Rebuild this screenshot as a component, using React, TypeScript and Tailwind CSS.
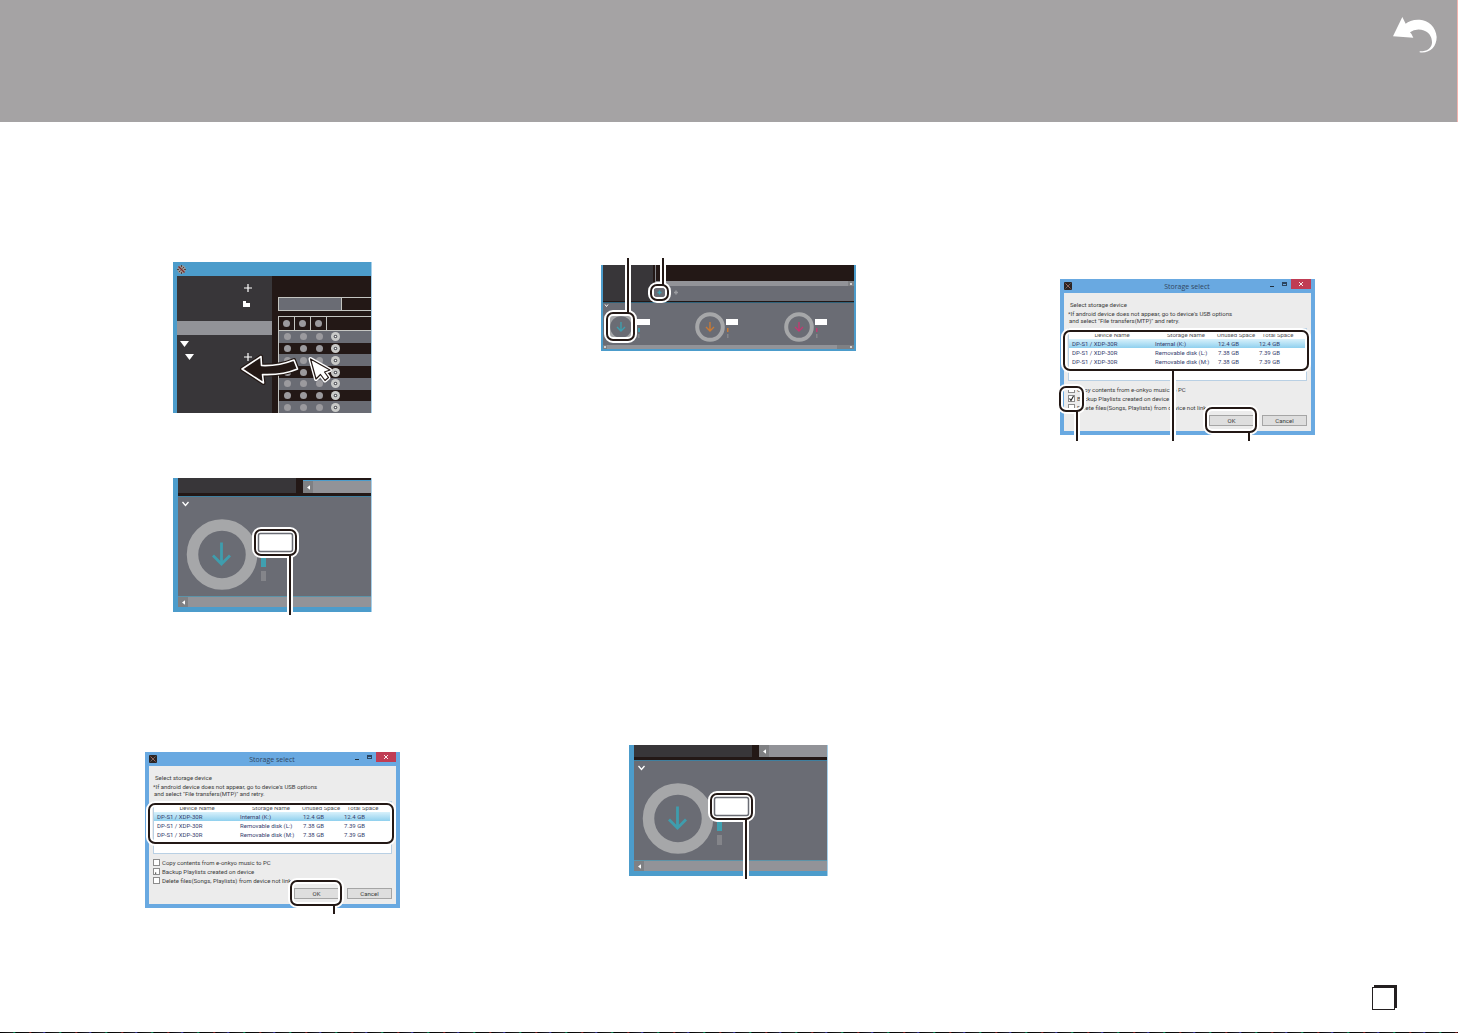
import React from 'react';

interface CalloutBox {
  x: number;
  y: number;
  w: number;
  h: number;
  r: number;
  stem?: { x: number; from: number; to: number };
}

interface CalloutsProps {
  boxes: CalloutBox[];
}

// Highlight frames with leader lines that lie over a figure
const Callouts: React.FC<CalloutsProps> = ({ boxes }) => (
  <svg className="absolute inset-0 w-full h-full overflow-visible pointer-events-none" fill="none">
    {boxes.map((b, idx) => (
      <g key={idx}>
        <rect x={b.x} y={b.y} width={b.w} height={b.h} rx={b.r} stroke="#fff" strokeWidth={6} />
        {b.stem && <path d={`M${b.stem.x} ${b.stem.from}V${b.stem.to}`} stroke="#fff" strokeWidth={6} />}
        <rect x={b.x} y={b.y} width={b.w} height={b.h} rx={b.r} stroke="#231815" strokeWidth={2} />
        {b.stem && <path d={`M${b.stem.x} ${b.stem.from}V${b.stem.to}`} stroke="#231815" strokeWidth={2} />}
      </g>
    ))}
  </svg>
);

const LogoIcon = ({ className }: { className: string }) => (
  <svg viewBox="0 0 8 8" className={className}>
    <rect width="8" height="8" rx="1" fill="#2c2524" />
    <path d="M1.500 1.500l5 5" stroke="#a5655c" strokeWidth="1" />
    <path d="M6.500 1.500l-5 5" stroke="#6d6563" strokeWidth="1" />
  </svg>
);

const PlusIcon = () => (
  <svg viewBox="0 0 8 8" className="w-2 h-2 shrink-0">
    <path d="M4 0v8M0 4h8" stroke="#fff" strokeWidth="1.200" />
  </svg>
);

const FolderIcon = () => (
  <svg viewBox="0 0 8 8" className="w-2 h-2 shrink-0">
    <path d="M1 1h3v2h4v4H1z" fill="#fff" />
  </svg>
);

const Triangle = () => (
  <svg viewBox="0 0 9 6" className="w-[9px] h-[6px] shrink-0">
    <path d="M0 0h9L4.500 6z" fill="#fff" />
  </svg>
);

const Dot = () => (
  <span className="w-4 flex justify-center">
    <span className="w-[7px] h-[7px] rounded-full bg-[#9b9a9e]"></span>
  </span>
);

const Disc = () => (
  <svg viewBox="0 0 10 10" className="w-[9px] h-[9px] ml-1">
    <circle cx="5" cy="5" r="5" fill="#c9cac8" />
    <circle cx="5" cy="5" r="2" fill="#55565b" />
    <circle cx="5" cy="5" r="0.900" fill="#fff" />
  </svg>
);

const DRAG_ARROW = 'M69 107L88 94.500L88.500 103.500C100 104 111 102 121 98L124.500 107C114 111.500 102 113 89.500 112.500L90.500 121Z';
const POINTER = 'M137.500 97L143 117L147.500 112.500L152 118.500L155.500 115.500L151.500 110L157 108Z';

const LibraryFigure: React.FC = () => (
  <div className="relative w-[199px] h-[151px] ml-7 flex flex-col bg-[#4c9ccb] border-r border-[#a5cfe9]">
    <div className="h-[14px] pl-1 flex items-center">
      <svg viewBox="0 0 9 9" className="w-[9px] h-[9px]">
        <circle cx="4.500" cy="4.500" r="4.200" fill="#9a9594" />
        <path d="M7 2L5.500 3.500M3.500 5.500L2 7M4.500 0v2M4.500 7v2M0 4.500h2M7 4.500h2" stroke="#4a4241" strokeWidth="1" />
        <path d="M1.500 1.500l6 6" stroke="#7c2b2a" strokeWidth="1.200" />
      </svg>
    </div>
    <div className="flex-1 flex pl-1">
      <div className="w-[95px] bg-[#383639] flex flex-col">
        <div className="h-6 flex items-center pl-[67px]"><PlusIcon /></div>
        <div className="h-[21px] flex items-start pl-[65px]"><FolderIcon /></div>
        <div className="h-[14px] bg-[#929398]"></div>
        <div className="h-[18px] flex items-center pl-[3px]"><Triangle /></div>
        <div className="h-2 flex items-center pl-2 gap-[50px]"><Triangle /><PlusIcon /></div>
      </div>
      <div className="flex-1 bg-[#231816] pl-[6px] pt-[21px] flex flex-col">
        <div className="h-[14px] flex border border-r-0 border-[#c4c5c1]">
          <div className="w-[63px] bg-[#6a6c74] border-r border-[#c4c5c1]"></div>
        </div>
        <div className="mt-[5px] flex-1 flex flex-col border-t border-l border-[#c4c5c1]">
          <div className="h-[14px] flex border-b border-[#c4c5c1]">
            {[0, 1, 2].map((col) => (
              <span key={col} className="w-4 flex items-center justify-center border-r border-[#c4c5c1]">
                <span className="w-[7px] h-[7px] rounded-full bg-[#9b9a9e]"></span>
              </span>
            ))}
          </div>
          {[0, 1, 2, 3, 4, 5, 6].map((row) => (
            <div key={row} className={`flex-1 flex items-center ${row % 2 === 0 ? 'bg-[#6a6c74]' : ''}`}>
              <Dot />
              <Dot />
              <Dot />
              <Disc />
            </div>
          ))}
        </div>
      </div>
    </div>
    {/* Drag arrow and mouse pointer */}
    <svg viewBox="0 0 199 151" className="absolute top-0 left-0 w-[199px] h-[151px]" strokeLinejoin="round">
      <path d={DRAG_ARROW} fill="#231815" stroke="#231815" strokeWidth="4" />
      <path d={DRAG_ARROW} fill="#231815" stroke="#fff" strokeWidth="1.600" />
      <path d={POINTER} fill="#fff" stroke="#fff" strokeWidth="4" />
      <path d={POINTER} fill="#fff" stroke="#231815" strokeWidth="1.200" />
    </svg>
  </div>
);

interface SyncFigureProps {
  topStrip?: boolean;
}

const SyncFigure: React.FC<SyncFigureProps> = ({ topStrip }) => (
  <div className="w-[199px] ml-7 bg-[#4c9ccb] border-r border-[#a5cfe9]">
    {topStrip && (
      <div className="h-[3px] pl-[5px] flex">
        <div className="w-[118px] bg-[#383639]"></div>
        <div className="w-[7px] bg-[#231816]"></div>
        <div className="flex-1 h-[2px] bg-[#231816]"></div>
      </div>
    )}
    <div className="pl-[5px]">
      <div className="h-3 flex">
        <div className="w-[118px] bg-[#383639]"></div>
        <div className="w-[7px] bg-[#231816]"></div>
        <div className="w-[10px] bg-[#7f8083] flex items-center justify-center">
          <svg viewBox="0 0 4 6" className="w-[3px] h-[5px]"><path d="M4 0v6L0 3z" fill="#fff" /></svg>
        </div>
        <div className="flex-1 bg-[#929398]"></div>
      </div>
      <div className="h-[3px] bg-[#231816]"></div>
      <div className="relative z-10 h-[100px] bg-[#6a6c74] border-t border-[#3f7f9f]">
        <svg viewBox="0 0 193 99" className="block w-[193px] h-[99px]">
          <path d="M4.500 5l3 3.500 3-3.500" fill="none" stroke="#fff" strokeWidth="1.300" />
          <circle cx="44" cy="57.500" r="29.500" fill="none" stroke="#a6a7a9" strokeWidth="11.500" />
          <path d="M43.500 45.500V67M35 58.500l8.500 8.500 8.500-8.500" fill="none" stroke="#3f9dad" strokeWidth="2.800" />
          <rect x="83" y="60" width="5" height="10" fill="#3fa0b0" />
          <rect x="83" y="74" width="5" height="10" fill="#84858a" />
        </svg>
        <Callouts boxes={[{ x: 77, y: 33, w: 41, h: 25, r: 6, stem: { x: 112, from: 58, to: 118 } }]} />
        <svg viewBox="0 0 193 99" className="absolute inset-0 w-[193px] h-[99px]">
          <rect x="80.500" y="36.500" width="34" height="18" rx="2" fill="#fff" stroke="#6a6c74" strokeWidth="1.500" />
        </svg>
      </div>
      <div className="h-[11px] flex border-t border-[#5c93a8]">
        <div className="w-[10px] bg-[#7f8083] flex items-center justify-center">
          <svg viewBox="0 0 4 6" className="w-[3px] h-[5px]"><path d="M4 0v6L0 3z" fill="#fff" /></svg>
        </div>
        <div className="flex-1 bg-[#929398]"></div>
      </div>
    </div>
    <div className="h-[5px]"></div>
  </div>
);

const RINGS = [
  { x: 18, color: '#3f9dad' },
  { x: 107, color: '#c97a35' },
  { x: 196, color: '#c23a72' },
];

const DevicesFigure: React.FC = () => (
  <div className="relative w-[255px] h-[86px] flex flex-col px-[2px] pb-[2px] bg-[#4c9ccb]">
    <div className="h-9 flex">
      <div className="w-[50px] bg-[#383639]"></div>
      <div className="w-[3px] bg-[#231816] border-r border-[#85868a]"></div>
      <div className="flex-1 flex flex-col bg-[#6a6c74]">
        <div className="h-4 bg-[#231816]"></div>
        <div className="h-[5px] bg-[#929398] flex justify-end">
          <div className="w-[6px] bg-[#7f8083] flex items-center justify-center">
            <span className="w-[2px] h-[2px] bg-[#d0d0d2]"></span>
          </div>
        </div>
        <svg viewBox="0 0 196 15" className="w-[196px] h-[15px]">
          <path d="M20 4.500v4M18 6.500h4" stroke="#9b9ca1" strokeWidth="1.500" />
        </svg>
      </div>
    </div>
    <div className="h-[2px] bg-[#231816] border-b border-[#2f6179]"></div>
    <div className="h-[42px] bg-[#6a6c74]">
      <svg viewBox="0 0 251 42" className="block w-[251px] h-[42px]">
        <path d="M2 1.500l1.500 2L5 1.500" fill="none" stroke="#fff" strokeWidth="1" />
        {RINGS.map((ring) => (
          <g key={ring.x}>
            <circle cx={ring.x} cy="24" r="12.800" fill="none" stroke="#a6a7a9" strokeWidth="4" />
            <path d={`M${ring.x} 19v9M${ring.x - 4} 24l4 4 4-4`} fill="none" stroke={ring.color} strokeWidth="1.400" />
            <rect x={ring.x + 16} y="16" width="12" height="6" fill="#fff" />
            <rect x={ring.x + 17} y="25" width="1.500" height="4" fill={ring.color} />
            <rect x={ring.x + 17} y="31" width="1.500" height="4" fill="#84858a" />
          </g>
        ))}
      </svg>
    </div>
    <div className="h-1 bg-[#929398] flex justify-between">
      <div className="w-1 bg-[#7f8083] flex items-center justify-center"><span className="w-[2px] h-[2px] bg-[#d0d0d2]"></span></div>
      <div className="w-[17px] bg-[#7f8083] flex items-center justify-end pr-[2px]"><span className="w-[2px] h-[2px] bg-[#d0d0d2]"></span></div>
    </div>
    <Callouts
      boxes={[
        { x: 6, y: 48, w: 27, h: 27, r: 6, stem: { x: 27, from: 48, to: -7 } },
        { x: 50, y: 20, w: 17, h: 15, r: 6, stem: { x: 62, from: 20, to: -7 } },
      ]}
    />
    <svg viewBox="0 0 255 86" className="absolute top-0 left-0 w-[255px] h-[86px]">
      <rect x="53" y="23" width="11" height="9" rx="3" fill="#6a6c74" />
      <path d="M58.500 25.500v4M56.500 27.500h4" stroke="#3fa0b0" strokeWidth="1.500" />
      <rect x="36" y="54" width="13" height="6" fill="#fff" />
      <rect x="37" y="63" width="2" height="4" fill="#3f9dad" />
    </svg>
  </div>
);

const DEVICES = [
  { name: 'DP-S1 / XDP-30R', storage: 'Internal (K:)', unused: '12.4 GB', total: '12.4 GB' },
  { name: 'DP-S1 / XDP-30R', storage: 'Removable disk (L:)', unused: '7.38 GB', total: '7.39 GB' },
  { name: 'DP-S1 / XDP-30R', storage: 'Removable disk (M:)', unused: '7.38 GB', total: '7.39 GB' },
];

const OPTIONS = [
  'Copy contents from e-onkyo music to PC',
  'Backup Playlists created on device',
  'Delete files(Songs, Playlists) from device not link',
];

interface StorageDialogProps {
  backup?: boolean;
  callouts: CalloutBox[];
}

const StorageDialog: React.FC<StorageDialogProps> = ({ backup, callouts }) => (
  <div className="relative w-[255px] h-[156px] flex flex-col px-1 pb-1 bg-[#69a9e1] text-[6px] leading-[7px] text-[#3c3c3c]">
    <div className="h-[14px] flex items-center justify-between">
      <LogoIcon className="w-[8px] h-[8px]" />
      <h2 className="flex-1 pl-[60px] text-center text-[7px] text-[#31475f] font-['Open_Sans',sans-serif]">Storage select</h2>
      <div className="self-start flex items-center pl-7 gap-2">
        <button aria-label="Minimize" className="w-1 h-[10px] flex items-center"><span className="w-1 h-px mt-1 bg-[#1f3040]"></span></button>
        <button aria-label="Maximize" className="w-[5px] h-[10px] flex items-center"><span className="w-[5px] h-1 border border-t-2 border-[#2c4560]"></span></button>
        <button aria-label="Close" className="w-[20px] h-[10px] -ml-1 bg-[#c03c54] flex items-center justify-center">
          <svg viewBox="0 0 4 4" className="w-1 h-1"><path d="M0 0l4 4M4 0L0 4" stroke="#fff" strokeWidth="0.900" /></svg>
        </button>
      </div>
    </div>
    <div className="flex-1 bg-[#ececec] flex flex-col px-[4px]">
      <p className="mt-2 pl-[2px]">Select storage device</p>
      <p className="mt-[2px]">*If android device does not appear, go to device's USB options</p>
      <p className="pl-px">and select "File transfers(MTP)" and retry.</p>
      <div className="mt-1 h-[53px] bg-white border border-[#b9d0e4]">
        <table className="w-full table-fixed border-collapse whitespace-nowrap text-[#35406e]">
          <colgroup>
            <col className="w-[86px]" />
            <col className="w-[62px]" />
            <col className="w-[42px]" />
            <col />
          </colgroup>
          <thead>
            <tr className="h-[10px] text-[#55565a]">
              <th className="font-normal p-0 text-center">Device Name</th>
              <th className="font-normal p-0 text-center">Storage Name</th>
              <th className="font-normal p-0 text-left">Unused Space</th>
              <th className="font-normal p-0 pl-[3px] text-left">Total Space</th>
            </tr>
          </thead>
          <tbody>
            {DEVICES.map((d, idx) => (
              <tr key={d.storage} className={idx === 0 ? 'h-[9px] bg-linear-to-b from-[#d8f1fb] to-[#8fd0ee]' : 'h-[9px]'}>
                <td className="p-0 pl-[3px]">{d.name}</td>
                <td className="p-0">{d.storage}</td>
                <td className="p-0 pl-px">{d.unused}</td>
                <td className="p-0">{d.total}</td>
              </tr>
            ))}
          </tbody>
        </table>
      </div>
      <div className="mt-[5px] flex flex-col gap-[2px]">
        {OPTIONS.map((option, idx) => (
          <label key={option} className="flex items-center gap-[2px] whitespace-nowrap">
            <span className="relative w-[7px] h-[7px]">
              <input type="checkbox" defaultChecked={idx === 1} className="peer block appearance-none w-[7px] h-[7px] bg-white border border-[#8c8c8c]" />
              <svg viewBox="0 0 7 7" className="absolute inset-0 hidden peer-checked:block w-[7px] h-[7px] pointer-events-none">
                {backup
                  ? <path d="M1.500 3.500l1.500 2L5.500 1" fill="none" stroke="#222" strokeWidth="1.100" />
                  : <path d="M2 4.500h1.200v1.200H2z" fill="#333" />}
              </svg>
            </span>
            {option}
          </label>
        ))}
      </div>
      <div className="mt-1 flex justify-end gap-2">
        <button className="w-[45px] h-[11px] border border-[#a5a5a5] bg-[#dedede]">OK</button>
        <button className="w-[45px] h-[11px] border border-[#a5a5a5] bg-[#dedede]">Cancel</button>
      </div>
    </div>
    <Callouts boxes={callouts} />
  </div>
);

const LIST_CALLOUT: CalloutBox = { x: 4, y: 52, w: 244, h: 39, r: 6 };
const OK_CALLOUT: CalloutBox = { x: 146, y: 129, w: 50, h: 24, r: 6, stem: { x: 189, from: 153, to: 162 } };

const App: React.FC = () => {
  return (
    <div className="min-h-screen flex flex-col bg-white font-[Roboto,'Noto_Sans',sans-serif]">
      <header className="h-[122px] bg-[#a5a3a4] border-r border-[#f3b3ae] flex justify-end items-start pt-[17px] pr-5">
        <a href="#" aria-label="Back">
          <svg viewBox="70 50 132 108" className="w-11 h-9">
            <path
              d="M98 50L70 108L131 112Q127 101 121 96Q134 85 155 88C178 92 188 110 187 128C185 145 170 154 150 153V156C180 160 201 140 201 110C199 80 176 59 150 58C130 57 116 63 108 70Z"
              fill="#fff"
            />
          </svg>
        </a>
      </header>

      <main className="flex-1 flex justify-between pl-[145px] pr-[143px]">
        <section className="w-[255px] pt-[140px]">
          <LibraryFigure />
          <div className="mt-[65px]"><SyncFigure topStrip /></div>
          <div className="mt-[140px]"><StorageDialog callouts={[LIST_CALLOUT, OK_CALLOUT]} /></div>
        </section>

        <section className="w-[258px] pt-[143px]">
          <DevicesFigure />
          <div className="mt-[394px]"><SyncFigure /></div>
        </section>

        <section className="w-[255px] pt-[157px]">
          <StorageDialog
            backup
            callouts={[
              { ...LIST_CALLOUT, stem: { x: 113, from: 91, to: 162 } },
              { x: 0, y: 108, w: 23, h: 24, r: 6, stem: { x: 17, from: 132, to: 162 } },
              OK_CALLOUT,
            ]}
          />
        </section>
      </main>

      <footer className="flex justify-end pr-[63px] pb-[22px]">
        <div className="w-[23px] h-[23px] bg-white border border-[#231f20] shadow-[2px_-2px_0_#231f20]"></div>
      </footer>
      <div className="h-px bg-[repeating-linear-gradient(90deg,#000_0px,#222_13px,#0a6_14px,#000_16px,#111_29px,#a22_30px,#000_32px,#223_43px,#44c_44px,#000_46px)]"></div>
    </div>
  );
};

export default App;
